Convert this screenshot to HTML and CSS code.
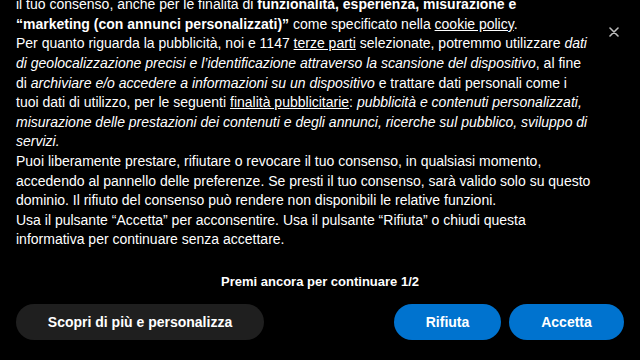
FILE: index.html
```html
<!DOCTYPE html>
<html lang="it">
<head>
<meta charset="utf-8">
<link rel="stylesheet" href="styles.css">
</head>
<body>
<div class="banner">
  <button class="close" aria-label="Chiudi">
    <svg width="10" height="10" viewBox="0 0 10 10"><path d="M1 1L9 9M9 1L1 9" stroke="#bdbdbd" stroke-width="1.6" stroke-linecap="round"/></svg>
  </button>
  <div class="scroll">
    <div class="text">
      <p>il tuo consenso, anche per le finalità di <b>funzionalità, esperienza, misurazione e “marketing (con annunci personalizzati)”</b> come specificato nella <a href="#">cookie policy</a>.</p>
      <p>Per quanto riguarda la pubblicità, noi e 1147 <a href="#">terze parti</a> selezionate, potremmo utilizzare <i>dati di geolocalizzazione precisi e l’identificazione attraverso la scansione del dispositivo</i>, al fine di <i>archiviare e/o accedere a informazioni su un dispositivo</i> e trattare dati personali come i tuoi dati di utilizzo, per le seguenti <a href="#">finalità pubblicitarie</a>: <i>pubblicità e contenuti personalizzati, misurazione delle prestazioni dei contenuti e degli annunci, ricerche sul pubblico, sviluppo di servizi.</i></p>
      <p>Puoi liberamente prestare, rifiutare o revocare il tuo consenso, in qualsiasi momento, accedendo al pannello delle preferenze. Se presti il tuo consenso, sarà valido solo su questo dominio. Il rifiuto del consenso può rendere non disponibili le relative funzioni.</p>
      <p>Usa il pulsante “Accetta” per acconsentire. Usa il pulsante “Rifiuta” o chiudi questa informativa per continuare senza accettare.</p>
    </div>
  </div>
  <div class="footer">
    <div class="hint">Premi ancora per continuare 1/2</div>
    <div class="actions">
      <button class="btn btn-dark">Scopri di più e personalizza</button>
      <div class="right">
        <button class="btn btn-blue btn-reject">Rifiuta</button>
        <button class="btn btn-blue btn-accept">Accetta</button>
      </div>
    </div>
  </div>
</div>
</body>
</html>
```
FILE: styles.css
```css
html, body {
  margin: 0;
  padding: 0;
  background: #000;
}
body {
  width: 640px;
  height: 360px;
  overflow: hidden;
  font-family: "Liberation Sans", Arial, sans-serif;
  color: #fff;
}
.banner {
  position: relative;
  height: 360px;
  display: flex;
  flex-direction: column;
}
.close {
  position: absolute;
  top: 27px;
  left: 609px;
  width: 10px;
  height: 10px;
  padding: 0;
  border: 0;
  background: none;
  display: flex;
}
.scroll {
  height: 250px;
  overflow: hidden;
  display: flex;
  flex-direction: column;
  justify-content: flex-end;
  padding: 0 49px 0 16px;
}
.text {
  font-size: 14px;
  line-height: 19.6px;
}
.text p {
  margin: 0;
}
.text a {
  color: #fff;
  text-decoration: underline;
}
.footer {
  flex: 1;
  display: flex;
  flex-direction: column;
  padding: 23px 16px 20px;
}
.hint {
  text-align: center;
  font-size: 13px;
  font-weight: bold;
  line-height: 18px;
}
.actions {
  margin-top: 13px;
  display: flex;
  justify-content: space-between;
}
.right {
  display: flex;
  gap: 8px;
}
.btn {
  height: 36px;
  border: 0;
  border-radius: 18px;
  font-family: "Liberation Sans", Arial, sans-serif;
  font-size: 14px;
  font-weight: bold;
  color: #fff;
  padding: 0;
}
.btn-dark {
  width: 248px;
  background: #1f1f1f;
}
.btn-blue {
  background: #0073cf;
}
.btn-reject {
  width: 107px;
}
.btn-accept {
  width: 115px;
}
```
